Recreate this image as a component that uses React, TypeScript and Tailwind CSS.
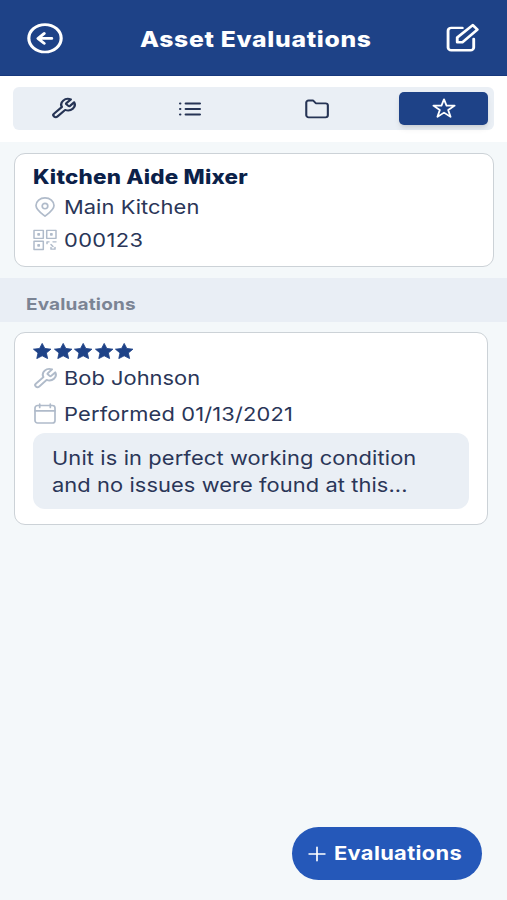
import React from "react";

type IconProps = {
  className?: string;
  strokeWidth?: number;
  children: React.ReactNode;
};

const Icon = ({ className, strokeWidth = 1.5, children }: IconProps) => {
  return (
    <svg
      viewBox="0 0 24 24"
      preserveAspectRatio="none"
      fill="none"
      stroke="currentColor"
      strokeWidth={strokeWidth}
      strokeLinecap="round"
      strokeLinejoin="round"
      className={className}
    >
      {children}
    </svg>
  );
};

const wrenchPath =
  "M14.7 6.3a1 1 0 0 0 0 1.4l1.6 1.6a1 1 0 0 0 1.4 0l3.77-3.77a6 6 0 0 1-7.94 7.94l-6.91 6.91a2.12 2.12 0 0 1-3-3l6.91-6.91a6 6 0 0 1 7.94-7.94l-3.76 3.76z";
const starPath =
  "M12 3.2l2.2 6.1h6.9l-5.5 4.1 2 6.6L12 16l-5.6 4 2-6.6-5.5-4.1h6.9z";

const Header = () => {
  return (
    <header className="flex h-[76px] items-center justify-between border-b border-[#17387c] bg-[#1e4287] pl-[25px] pr-[26px] text-white">
      <Icon className="h-[34px] w-[40px]" strokeWidth={1.9}>
        <circle cx="12" cy="12.2" r="9.7" />
        <path d="M16 12.3H8M11.5 8.8l-3.7 3.5 3.7 3.5" />
      </Icon>
      <h1 className="flex w-[233px] justify-center whitespace-nowrap pl-[4px] pt-[3px] text-[21.5px] font-extrabold leading-7 tracking-[0.6px]">
        <span className="scale-x-[1.15]">Asset Evaluations</span>
      </h1>
      <Icon className="h-[33px] w-[38px]" strokeWidth={1.8}>
        <path d="M12.2 5H5.2a2 2 0 0 0-2 2v12.2a2 2 0 0 0 2 2h12.2a2 2 0 0 0 2-2V13" />
        <path d="M9 15.5v-3.500L18.8 3l2.9 3.2-9.5 9.3z" />
      </Icon>
    </header>
  );
};

const Tabs = () => {
  return (
    <div className="h-[66px] bg-white px-[13px] pt-[11px]">
      <div className="grid h-[43px] grid-cols-[101px_152px_101px_1fr] items-center rounded-[6px] bg-[#eaeff5] pr-[6px] text-[#263455]">
        <button className="flex justify-center">
          <Icon className="h-[23px] w-[27px]" strokeWidth={2.1}>
            <path d={wrenchPath} />
          </Icon>
        </button>
        <button className="flex justify-center">
          <Icon className="h-[24px] w-[28px]" strokeWidth={1.9}>
            <path d="M8.3 6.5h12.2M8.3 12h12.2M8.3 17.5h12.2" />
            <path d="M3.5 6.5h.2M3.5 12h.2M3.5 17.5h.2" />
          </Icon>
        </button>
        <button className="flex justify-center">
          <Icon className="h-[24px] w-[28px]" strokeWidth={1.8}>
            <path d="M2.8 5.5a2 2 0 0 1 2-2h3.9L11 6.3h8.3a2 2 0 0 1 2 2v10a2 2 0 0 1-2 2H4.8a2 2 0 0 1-2-2z" />
          </Icon>
        </button>
        <button className="ml-auto flex h-[33px] w-[89px] items-center justify-center rounded-[5px] bg-[#1e4287] text-white shadow-md">
          <Icon className="h-[25px] w-[28px]" strokeWidth={1.6}>
            <path d={starPath} />
          </Icon>
        </button>
      </div>
    </div>
  );
};

const AssetCard = () => {
  return (
    <section className="ml-[14px] mt-[11px] h-[114px] w-[480px] rounded-[11px] border border-[#ccd2d7] bg-white pl-[18px] pt-[11px]">
      <h2 className="flex h-[26px] items-center whitespace-nowrap text-[19.5px] font-extrabold tracking-[0.18px] text-[#0b2149]">
        <span className="origin-left scale-x-[1.15]">Kitchen Aide Mixer</span>
      </h2>
      <div className="flex h-[33px] items-center gap-[7px]">
        <Icon className="h-[23px] w-[24px] text-[#b0bbca]" strokeWidth={1.7}>
          <path d="M12 21c-3-2.5-9-6.2-9-11a9 8 0 0 1 18 0c0 4.8-6 8.500-9 11z" />
          <circle cx="12" cy="10.5" r="2.8" />
        </Icon>
        <span className="origin-left scale-x-[1.15] pt-[2px] text-[19px] tracking-[0.05px]">
          Main Kitchen
        </span>
      </div>
      <div className="-mt-px flex h-[33px] items-center gap-[7px]">
        <Icon className="h-[22px] w-[24px] text-[#b0bbca]" strokeWidth={1.5}>
          <path d="M1 1.5h9.3v8.7H1zM13.7 1.5H23v8.7h-9.3zM1 13.3h9.3v9H1z" />
          <path d="M5 5.2h1.3v1.3H5zM17.7 5.2H19v1.3h-1.3zM5 17.2h1.3v1.3H5z" />
          <path d="M14 16v-2h2M20 14h3M18 17l2 2M18 20v2h4v-2" />
        </Icon>
        <span className="origin-left scale-x-[1.15] pt-[3px] text-[19px] tracking-[0.35px]">
          000123
        </span>
      </div>
    </section>
  );
};

const EvaluationCard = () => {
  return (
    <section className="ml-[14px] mt-[10px] h-[193px] w-[474px] rounded-[11px] border border-[#ccd2d7] bg-white pl-[18px] pt-[9px]">
      <div className="flex h-[18px] items-center gap-[2.2px]">
        {[1, 2, 3, 4, 5].map((item) => {
          return (
            <svg
              key={item}
              viewBox="1.5 1.5 21 20"
              preserveAspectRatio="none"
              className="h-[16px] w-[18.4px] fill-[#1e4287] stroke-[#1e4287]"
              strokeLinejoin="round"
            >
              <path d="M12 2l3 6.3 7 .9-5.2 4.7L18.2 21 12 17.5 5.8 21l1.4-7.1L2 9.2l7-.9z" />
            </svg>
          );
        })}
      </div>
      <div className="mt-px flex h-[35px] items-center gap-[7px]">
        <Icon className="-ml-px h-[23px] w-[26px] text-[#b0bbca]" strokeWidth={1.9}>
          <path d={wrenchPath} />
        </Icon>
        <span className="-ml-px origin-left scale-x-[1.15] pt-[2px] text-[19px] tracking-[0.02px]">
          Bob Johnson
        </span>
      </div>
      <div className="flex h-[35px] items-center gap-[7px]">
        <Icon className="h-[24px] w-[24px] text-[#b0bbca]" strokeWidth={1.7}>
          <rect x="2" y="3.5" width="20" height="17.5" rx="2.5" />
          <path d="M2 8.8h20M6.7 2v3.5M17.3 2v3.5" />
        </Icon>
        <span className="origin-left scale-x-[1.15] whitespace-nowrap pt-[3px] text-[19px] tracking-[0.14px]">
          Performed 01/13/2021
        </span>
      </div>
      <p className="mt-[2px] flex h-[76px] w-[436px] flex-col items-start justify-center whitespace-nowrap rounded-[12px] bg-[#eaeff5] pl-[18.5px] pt-[2px] text-[19px] leading-[27px]">
        <span className="origin-left scale-x-[1.15] tracking-[0.1px]">
          Unit is in perfect working condition
        </span>
        <span className="origin-left scale-x-[1.15] tracking-[0.07px]">
          and no issues were found at this...
        </span>
      </p>
    </section>
  );
};

const App = () => {
  return (
    <div className="flex h-[900px] w-[507px] flex-col overflow-hidden bg-[#f4f8fa] font-['Inter',sans-serif] text-[#2a3658]">
      <Header />
      <Tabs />
      <AssetCard />
      <div className="mt-[11px] flex h-[44px] items-center bg-[#e9eef5] pl-[26px] pt-[9px] text-[16.5px] font-bold tracking-[0.15px] text-[#7b8494]">
        <span className="origin-left scale-x-[1.15]">Evaluations</span>
      </div>
      <EvaluationCard />
      <button className="mb-[20px] ml-auto mr-[25px] mt-auto flex h-[53px] w-[190px] items-center rounded-full bg-[#2558b9] pl-[15px] text-white">
        <Icon className="h-[18px] w-[20px]" strokeWidth={2}>
          <path d="M12 3v18M2.5 12h19" />
        </Icon>
        <span className="ml-[7px] origin-left scale-x-[1.15] pt-[2px] text-[19px] font-bold tracking-[0.3px]">
          Evaluations
        </span>
      </button>
    </div>
  );
};

export default App;
